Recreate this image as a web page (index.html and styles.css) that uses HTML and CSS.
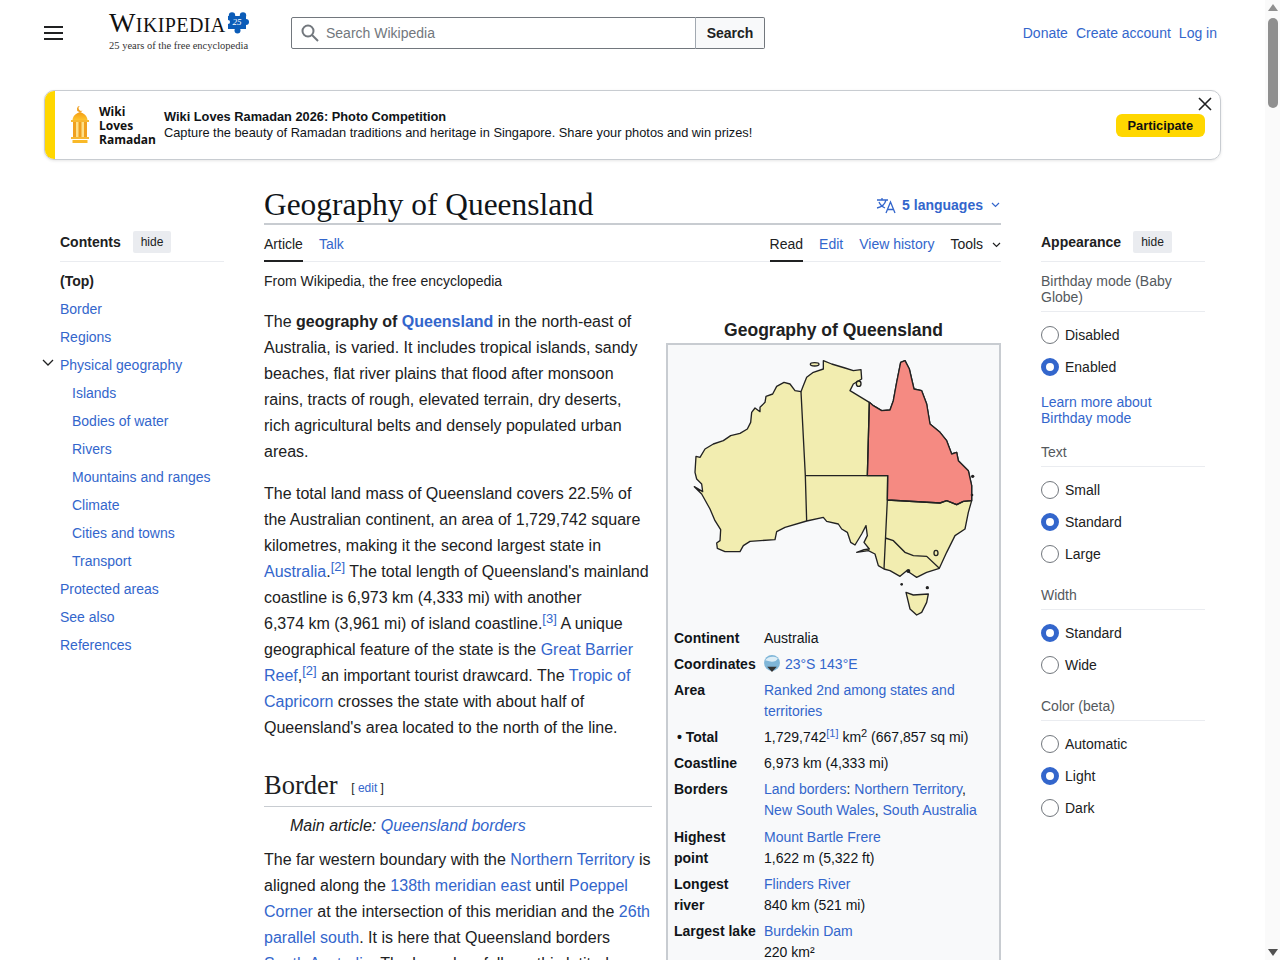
FILE: index.html
```html
<!DOCTYPE html>
<html lang="en">
<head>
    <meta charset="UTF-8">
    <title>Geography of Queensland - Wikipedia</title>
    <link rel="stylesheet" href="styles.css">
</head>
<body>

<div class="page">

    <header class="top">
        <div class="top-left">
            <svg class="burger" width="20" height="14" viewBox="0 0 20 14"><path d="M0 1h19M0 7h19M0 13h19" stroke="#202122" stroke-width="2"/></svg>
            <div class="logo">
                <div class="wordrow">
                    <span class="word">Wikipedia</span>
                    <svg class="puzzle" width="22" height="22" viewBox="0 0 22 22">
                        <path d="M1 4h18v13H1z" fill="#0b5cb8"/>
                        <circle cx="5" cy="3.500" r="3.200" fill="#0b5cb8"/>
                        <circle cx="16" cy="3.500" r="3.200" fill="#0b5cb8"/>
                        <circle cx="19" cy="10" r="3" fill="#0b5cb8"/>
                        <circle cx="10.500" cy="18.500" r="3" fill="#0b5cb8"/>
                        <circle cx="1" cy="10" r="2" fill="#fff"/>
                        <text x="5.500" y="13" class="puzzle-num">25</text>
                    </svg>
                </div>
                <div class="tagline">25 years of the free encyclopedia</div>
            </div>
        </div>
        <form class="search">
            <div class="search-box">
                <svg width="18" height="18" viewBox="0 0 18 18"><circle cx="7" cy="7" r="5.500" fill="none" stroke="#72777d" stroke-width="2"/><path d="M11 11l6 6" stroke="#72777d" stroke-width="2"/></svg>
                <span>Search Wikipedia</span>
            </div>
            <div class="search-btn">Search</div>
        </form>
        <nav class="top-links">
            <a href="#">Donate</a>
            <a href="#">Create account</a>
            <a href="#">Log in</a>
        </nav>
    </header>

    <div class="banner">
        <div class="banner-stripe"></div>
        <svg class="lantern" width="20" height="40" viewBox="0 0 20 40">
            <defs>
                <linearGradient id="lampgrad" x1="0" y1="0" x2="0" y2="1"><stop offset="0" stop-color="#f39c12"/><stop offset="1" stop-color="#fdc42f"/></linearGradient>
            </defs>
            <path d="M10 1a3 3 0 1 0 2.500 4.500A2.500 2.500 0 0 1 10 1z" fill="#f0a020"/>
            <path d="M2.500 15C3 10 7 8 10 7c3 1 7 3 7.500 8z" fill="url(#lampgrad)"/>
            <rect x="1" y="15" width="18" height="2" fill="#f7b733"/>
            <rect x="3" y="17" width="14" height="15" fill="#fde08a"/>
            <rect x="3" y="17" width="3" height="15" fill="#f0a020"/>
            <rect x="8.500" y="17" width="3" height="15" fill="#f0a020"/>
            <rect x="14" y="17" width="3" height="15" fill="#f0a020"/>
            <rect x="1" y="32" width="18" height="2" fill="#f7b733"/>
            <rect x="2.500" y="35" width="15" height="3" fill="#f9b928"/>
        </svg>
        <div class="banner-brand">Wiki<br>Loves<br>Ramadan</div>
        <div class="banner-text">
            <b>Wiki Loves Ramadan 2026: Photo Competition</b><br>
            Capture the beauty of Ramadan traditions and heritage in Singapore. Share your photos and win prizes!
        </div>
        <div class="banner-cta">Participate</div>
        <svg class="banner-close" width="14" height="14" viewBox="0 0 14 14"><path d="M1 1l12 12M13 1L1 13" stroke="#202122" stroke-width="1.600"/></svg>
    </div>

    <div class="columns">

        <aside class="toc">
            <div class="side-head">
                <b>Contents</b><span class="hide-btn">hide</span>
            </div>
            <ul class="toc-list">
                <li class="toc-top">(Top)</li>
                <li><a href="#">Border</a></li>
                <li><a href="#">Regions</a></li>
                <li class="has-kids">
                    <svg class="toc-arrow" width="12" height="8" viewBox="0 0 12 8"><path d="M1 1l5 5 5-5" fill="none" stroke="#202122" stroke-width="1.300"/></svg>
                    <a href="#">Physical geography</a>
                </li>
                <li class="sub"><a href="#">Islands</a></li>
                <li class="sub"><a href="#">Bodies of water</a></li>
                <li class="sub"><a href="#">Rivers</a></li>
                <li class="sub"><a href="#">Mountains and ranges</a></li>
                <li class="sub"><a href="#">Climate</a></li>
                <li class="sub"><a href="#">Cities and towns</a></li>
                <li class="sub"><a href="#">Transport</a></li>
                <li><a href="#">Protected areas</a></li>
                <li><a href="#">See also</a></li>
                <li><a href="#">References</a></li>
            </ul>
        </aside>

        <main class="content">
            <div class="title-row">
                <h1>Geography of Queensland</h1>
                <div class="langs">
                    <svg width="20" height="17" viewBox="0 0 20 17"><path d="M1 3h11M6 1v2M10 3c-1 4-4 7-9 8M3 5c1 3 4 5 6 6M10 16l4.500-11L19 16M11.500 12.500h6" fill="none" stroke="#3366cc" stroke-width="1.300"/></svg>
                    <b>5 languages</b>
                    <svg class="chev" width="9" height="6" viewBox="0 0 9 6"><path d="M1 1l3.500 3.500L8 1" fill="none" stroke="#3366cc" stroke-width="1.200"/></svg>
                </div>
            </div>
            <div class="tabs">
                <div class="tabs-left">
                    <span class="tab active">Article</span>
                    <a class="tab" href="#">Talk</a>
                </div>
                <div class="tabs-right">
                    <span class="tab active">Read</span>
                    <a class="tab" href="#">Edit</a>
                    <a class="tab" href="#">View history</a>
                    <span class="tab tools">Tools
                        <svg class="chev" width="9" height="6" viewBox="0 0 9 6"><path d="M1 1l3.500 3.500L8 1" fill="none" stroke="#202122" stroke-width="1.200"/></svg>
                    </span>
                </div>
            </div>
            <div class="from">From Wikipedia, the free encyclopedia</div>

            <div class="article">
                <div class="infobox">
                    <div class="info-caption">Geography of Queensland</div>
                    <div class="info-body">
                        <svg class="map" width="331" height="283" viewBox="24 18 993 849">
                            <path class="land" d="M423 158L405 155 390 135 372 130 350 142 338 165 318 172 315 190 300 205 300 218 285 207 275 220 272 250 262 270 240 283 212 290 190 305 160 315 135 330 120 355 108 352 105 400 110 420 125 435 128 458 103 443 125 465 150 510 165 545 182 572 180 605 170 612 172 628 195 638 240 638 250 620 270 607 345 602 350 578 375 565 440 546 490 535 500 547 535 555 545 570 562 580 572 610 585 618 605 585 618 560 622 590 612 610 628 630 612 632 590 640 625 635 645 645 655 680 672 690 690 695 720 712 740 695 755 705 770 715 800 700 838 688 860 640 885 590 915 570 925 520 935 485 935 440 925 395 895 365 890 340 875 345 860 305 840 280 810 255 800 195 785 155 762 150 748 90 735 65 722 70 710 130 700 185 690 213 665 215 640 200 628 190 570 155 580 135 605 120 603 92 580 95 555 87 515 75 490 65 490 90 460 100 440 115 428 145z"/>
                            <path class="qld" d="M628 190L640 200 665 215 690 213 700 185 710 130 722 70 735 65 748 90 762 150 785 155 800 195 810 255 840 280 860 305 875 345 890 340 895 365 925 395 935 440 935 485 910 487 890 497 860 485 840 492 682 483 683 410 622 410z"/>
                            <path class="line" d="M423 158L436 410 440 546M436 410H683L682 483 672 690M622 410L628 190M682 483L840 492 860 485 890 497 910 487 935 485M676 597L700 605 735 640 760 650 800 652 838 688"/>
                            <path class="land" d="M738 760L760 768 805 765 800 790 785 820 770 828 750 810z"/>
                            <ellipse class="land" cx="464" cy="76" rx="13" ry="5"/>
                            <ellipse class="land" cx="596" cy="134" rx="7" ry="8"/>
                            <ellipse class="land" cx="828" cy="642" rx="6" ry="8"/>
                            <circle cx="745" cy="696" r="6" fill="#222"/>
                            <circle cx="725" cy="736" r="4" fill="#222"/>
                            <circle cx="802" cy="746" r="5" fill="#222"/>
                            <circle cx="938" cy="412" r="5" fill="#222"/>
                            <circle cx="936" cy="468" r="4" fill="#222"/>
                        </svg>
                        <table class="info-table">
                            <tr><th>Continent</th><td>Australia</td></tr>
                            <tr><th>Coordinates</th><td><svg class="globe" width="18" height="18" viewBox="0 0 17 17"><circle cx="8.500" cy="7.500" r="7.500" fill="#7fb6d8"/><path d="M2 5c3-4 8-4 12-2-1 3-5 4-8 3z" fill="#dcedf6"/><path d="M4 11h9l-4.500 5z" fill="#333"/></svg> <a href="#">23°S 143°E</a></td></tr>
                            <tr><th>Area</th><td><a href="#">Ranked 2nd among states and territories</a></td></tr>
                            <tr><th class="bullet">• Total</th><td>1,729,742<sup class="ref"><a href="#">[1]</a></sup> km<sup>2</sup> (667,857 sq mi)</td></tr>
                            <tr><th>Coastline</th><td>6,973 km (4,333 mi)</td></tr>
                            <tr class="borders"><th>Borders</th><td><a href="#">Land borders</a>: <a href="#">Northern Territory</a>, <a href="#">New South Wales</a>, <a href="#">South Australia</a></td></tr>
                            <tr><th>Highest point</th><td><a href="#">Mount Bartle Frere</a><br>1,622 m (5,322 ft)</td></tr>
                            <tr><th>Longest river</th><td><a href="#">Flinders River</a><br>840 km (521 mi)</td></tr>
                            <tr><th>Largest lake</th><td><a href="#">Burdekin Dam</a><br>220 km²</td></tr>
                        </table>
                    </div>
                </div>

                <p>The <b>geography of <a href="#">Queensland</a></b> in the north-east of Australia, is varied. It includes tropical islands, sandy beaches, flat river plains that flood after monsoon rains, tracts of rough, elevated terrain, dry deserts, rich agricultural belts and densely populated urban areas.</p>
                <p>The total land mass of Queensland covers 22.5% of the Australian continent, an area of 1,729,742 square kilometres, making it the second largest state in <a href="#">Australia</a>.<sup class="ref"><a href="#">[2]</a></sup> The total length of Queensland's mainland coastline is 6,973&nbsp;km (4,333&nbsp;mi) with another 6,374&nbsp;km (3,961&nbsp;mi) of island coastline.<sup class="ref"><a href="#">[3]</a></sup> A unique geographical feature of the state is the <a href="#">Great Barrier Reef</a>,<sup class="ref"><a href="#">[2]</a></sup> an important tourist drawcard. The <a href="#">Tropic of Capricorn</a> crosses the state with about half of Queensland's area located to the north of the line.</p>

                <h2>Border <span class="edit">[ <a href="#">edit</a> ]</span></h2>
                <div class="hatnote">Main article: <a href="#">Queensland borders</a></div>
                <p>The far western boundary with the <a href="#">Northern Territory</a> is aligned along the <a href="#">138th meridian east</a> until <a href="#">Poeppel Corner</a> at the intersection of this meridian and the <a href="#">26th parallel south</a>. It is here that Queensland borders <a href="#">South Australia</a>. The boundary follows this latitude</p>
            </div>
        </main>

        <aside class="appearance">
            <div class="side-head">
                <b>Appearance</b><span class="hide-btn">hide</span>
            </div>

            <div class="app-group">
                <div class="app-label">Birthday mode (Baby Globe)</div>
                <div class="radio"><i></i>Disabled</div>
                <div class="radio on"><i></i>Enabled</div>
                <a class="app-more" href="#">Learn more about Birthday mode</a>
            </div>
            <div class="app-group">
                <div class="app-label">Text</div>
                <div class="radio"><i></i>Small</div>
                <div class="radio on"><i></i>Standard</div>
                <div class="radio"><i></i>Large</div>
            </div>
            <div class="app-group">
                <div class="app-label">Width</div>
                <div class="radio on"><i></i>Standard</div>
                <div class="radio"><i></i>Wide</div>
            </div>
            <div class="app-group">
                <div class="app-label">Color (beta)</div>
                <div class="radio"><i></i>Automatic</div>
                <div class="radio on"><i></i>Light</div>
                <div class="radio"><i></i>Dark</div>
            </div>
        </aside>

    </div>
</div>

<div class="scrollbar">
    <span class="sb-up"></span>
    <span class="sb-thumb"></span>
    <span class="sb-down"></span>
</div>

</body>
</html>
```

FILE: styles.css
```css
html
{
    overflow: hidden;
}
body
{
    margin: 0 15px 0 0;
    background: #fff;
    color: #202122;
    font-family: "Liberation Sans", Arial, sans-serif;
    font-size: 14px;
}
a
{
    color: #3366cc;
    text-decoration: none;
}
.page
{
    padding: 0 44px;
}

/* drawn scrollbar, sits over the page edge */
.scrollbar
{
    position: fixed;
    top: 0;
    right: 0;
    bottom: 0;
    width: 15px;
    background: #fafafa;
}
.sb-thumb
{
    position: absolute;
    top: 18px;
    left: 3px;
    width: 10px;
    height: 90px;
    border-radius: 5px;
    background: #8f8f8f;
}
.sb-up, .sb-down
{
    position: absolute;
    left: 3px;
    border-left: 5px solid transparent;
    border-right: 5px solid transparent;
}
.sb-up
{
    top: 4px;
    border-bottom: 7px solid #8f8f8f;
}
.sb-down
{
    bottom: 4px;
    border-top: 7px solid #505050;
}

/* header */
.top
{
    display: flex;
    align-items: center;
    height: 66px;
}
.top-left
{
    display: flex;
    align-items: center;
    width: 247px;
}
.burger
{
    margin-right: 45px;
}
.logo
{
    width: 140px;
}
.wordrow
{
    display: flex;
    align-items: center;
    height: 24px;
    margin-top: -2px;
}
.word
{
    font-family: "Liberation Serif", serif;
    font-variant: small-caps;
    font-size: 28px;
    line-height: 24px;
    color: #111;
    letter-spacing: 0.400px;
}
.puzzle
{
    margin-left: 1px;
    flex: none;
}
.puzzle-num
{
    font-family: "Liberation Serif", serif;
    font-style: italic;
    font-size: 9px;
    fill: #fff;
}
.tagline
{
    font-family: "Liberation Serif", serif;
    font-size: 10.500px;
    line-height: 14px;
    margin-top: 4px;
    color: #333;
    white-space: nowrap;
}
.search
{
    display: flex;
    height: 32px;
    width: 474px;
}
.search-box
{
    flex: 1;
    display: flex;
    align-items: center;
    gap: 7px;
    padding-left: 9px;
    border: 1px solid #72777d;
    border-radius: 2px 0 0 2px;
    color: #72777d;
}
.search-btn
{
    width: 68px;
    border: 1px solid #72777d;
    border-left-color: #a2a9b1;
    border-radius: 0 2px 2px 0;
    margin-left: -1px;
    background: #f8f9fa;
    font-weight: bold;
    text-align: center;
    line-height: 30px;
}
.top-links
{
    margin-left: auto;
    margin-right: 4px;
    display: flex;
    gap: 8px;
}

/* banner */
.banner
{
    display: flex;
    align-items: center;
    position: relative;
    height: 68px;
    margin-top: 24px;
    border: 1px solid #c8ccd1;
    border-radius: 10px;
    box-shadow: 0 1px 3px rgba(0,0,0,0.1);
    overflow: hidden;
    font-size: 12.800px;
    line-height: 16px;
}
.banner-stripe
{
    width: 10px;
    height: 100%;
    background: #ffd700;
}
.lantern
{
    margin-left: 15px;
}
.banner-brand
{
    width: 65px;
    margin-left: 9px;
    margin-top: 2px;
    font-family: "Open Sans", sans-serif;
    font-weight: bold;
    font-size: 12px;
    line-height: 14px;
    color: #111;
}
.banner-text
{
    flex: 1;
    color: #101418;
    margin-top: -1px;
}
.banner-cta
{
    height: 23px;
    margin-right: 15px;
    padding: 0 12px;
    border-radius: 6px;
    background: #ffd700;
    color: #111;
    font-weight: bold;
    line-height: 23px;
}
.banner-close
{
    position: absolute;
    top: 6px;
    right: 8px;
}

/* three columns */
.columns
{
    display: grid;
    grid-template-columns: 164px 737px 164px;
    gap: 40px;
    padding: 0 16px;
    margin-top: 27px;
}
.side-head
{
    display: flex;
    align-items: center;
    gap: 12px;
    height: 38px;
    margin-top: 36px;
    border-bottom: 1px solid #eaecf0;
}
.hide-btn
{
    padding: 0 8px;
    background: #eaecf0;
    border-radius: 2px;
    font-size: 12px;
    line-height: 22px;
}

/* contents */
.toc-list
{
    list-style: none;
    margin: 5px 0 0;
    padding: 0;
}
.toc-list li
{
    height: 28px;
    line-height: 28px;
    position: relative;
}
.toc-top
{
    font-weight: bold;
}
.toc-list .sub
{
    padding-left: 12px;
}
.toc-arrow
{
    position: absolute;
    left: -18px;
    top: 8px;
}

/* article */
.title-row
{
    display: flex;
    align-items: flex-end;
    justify-content: space-between;
    height: 36px;
    border-bottom: 2px solid #c8ccd1;
}
h1
{
    margin: 0;
    font-family: "Liberation Serif", serif;
    font-weight: normal;
    font-size: 31.400px;
    line-height: 36px;
    color: #101418;
}
.langs
{
    display: flex;
    align-items: center;
    gap: 6px;
    height: 36px;
    margin-right: 1px;
    color: #3366cc;
}
.chev
{
    margin-left: 2px;
}
.tabs
{
    display: flex;
    justify-content: space-between;
    height: 36px;
    border-bottom: 1px solid #eaecf0;
}
.tabs-left, .tabs-right
{
    display: flex;
    gap: 16px;
}
.tab
{
    line-height: 38px;
    height: 36px;
    box-sizing: border-box;
}
.tab.active
{
    border-bottom: 2px solid #202122;
    margin-bottom: -1px;
    height: 37px;
}
.tools .chev
{
    margin-left: 5px;
    vertical-align: middle;
}
.from
{
    margin-top: 9px;
    line-height: 20px;
}
.article
{
    font-size: 16px;
    line-height: 26px;
    margin-top: 18px;
}
.article p
{
    margin: 0 0 16px;
}
.ref
{
    font-size: 13px;
    line-height: 1;
    vertical-align: 6px;
}
h2
{
    margin: 29px 0 6px;
    padding-bottom: 3px;
    width: 388px;
    border-bottom: 1px solid #c8ccd1;
    font-family: "Liberation Serif", serif;
    font-weight: normal;
    font-size: 26.500px;
    line-height: 30px;
}
.edit
{
    margin-left: 7px;
    font-family: "Liberation Sans", sans-serif;
    font-size: 12px;
    vertical-align: 2px;
}
.hatnote
{
    font-style: italic;
    padding-left: 26px;
    margin-bottom: 8px;
}

/* infobox */
.infobox
{
    float: right;
    position: relative;
    width: 335px;
    margin: 0 0 12px 15px;
    background: #fff;
}
.info-caption
{
    font-weight: bold;
    font-size: 17.500px;
    line-height: 22px;
    text-align: center;
    margin: 10px 0 2px;
}
.info-body
{
    border: 2px solid #c8ccd1;
    border-bottom: 0;
    background: #f8f9fa;
    font-size: 14px;
    line-height: 21px;
    padding-bottom: 8px;
}
.map
{
    display: block;
    fill: none;
}
.land
{
    fill: #f2edb0;
    stroke: #222;
    stroke-width: 4;
    stroke-linejoin: round;
}
.qld
{
    fill: #f58a82;
    stroke: #222;
    stroke-width: 4;
    stroke-linejoin: round;
}
.line
{
    fill: none;
    stroke: #222;
    stroke-width: 4;
}
.info-table
{
    border-collapse: collapse;
    table-layout: fixed;
    width: 318px;
    margin: 0 0 0 6px;
}
.info-table th
{
    width: 82px;
    padding: 0 8px 5px 0;
    text-align: left;
    vertical-align: top;
    color: #101418;
}
.info-table td
{
    padding: 0 0 5px 0;
    vertical-align: top;
    color: #101418;
}
.info-table .borders th, .info-table .borders td
{
    padding-bottom: 6px;
}
.info-table .bullet
{
    padding-left: 3px;
}
.info-table sup
{
    font-size: 11px;
    line-height: 1;
    vertical-align: 5px;
}
.globe
{
    vertical-align: -4px;
    margin-left: -1px;
}

/* appearance */
.app-group
{
    margin-bottom: 17px;
}
.side-head + .app-group
{
    margin-top: 11px;
    margin-bottom: 18px;
}
.app-label
{
    color: #54595d;
    line-height: 16px;
    padding-bottom: 6px;
    margin-bottom: 7px;
    border-bottom: 1px solid #eaecf0;
}
.radio
{
    display: flex;
    align-items: center;
    gap: 6px;
    height: 32px;
}
.radio i
{
    width: 18px;
    height: 18px;
    box-sizing: border-box;
    border: 1px solid #72777d;
    border-radius: 50%;
}
.radio.on i
{
    border: 5px solid #3366cc;
}
.app-more
{
    display: block;
    margin-top: 11px;
    line-height: 16px;
}
```
